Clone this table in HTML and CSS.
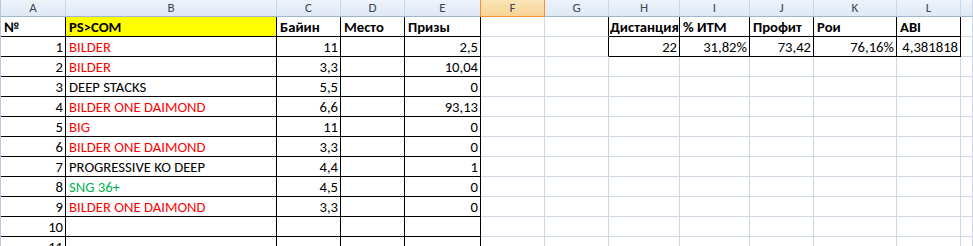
FILE: index.html
```html
<!DOCTYPE html>
<html>
<head>
<meta charset="utf-8">
<title>Турниры</title>
<link rel="stylesheet" href="styles.css">
</head>
<body>
<div class="sheet">
  <div class="row heads">
    <div class="ch">A</div><div class="ch">B</div><div class="ch">C</div><div class="ch">D</div>
    <div class="ch">E</div><div class="ch sel">F</div><div class="ch">G</div><div class="ch">H</div>
    <div class="ch">I</div><div class="ch">J</div><div class="ch">K</div><div class="ch">L</div><div class="ch"></div>
  </div>

  <div class="row">
    <div class="c b bold">№</div><div class="c b bold yellow">PS&gt;COM</div><div class="c b bold">Байин</div>
    <div class="c b bold">Место</div><div class="c b bold">Призы</div><div class="c"></div><div class="c edge"></div>
    <div class="c b bold tight">Дистанция</div><div class="c b bold">% ИТМ</div><div class="c b bold">Профит</div>
    <div class="c b bold">Рои</div><div class="c b bold">ABI</div><div class="c"></div>
  </div>
  <div class="row">
    <div class="c b n">1</div><div class="c b red">BILDER</div><div class="c b n">11</div>
    <div class="c b"></div><div class="c b n">2,5</div><div class="c"></div><div class="c edge"></div>
    <div class="c b n">22</div><div class="c b n">31,82%</div><div class="c b n">73,42</div>
    <div class="c b n">76,16%</div><div class="c b n">4,381818</div><div class="c"></div>
  </div>
  <div class="row">
    <div class="c b n">2</div><div class="c b red">BILDER</div><div class="c b n">3,3</div>
    <div class="c b"></div><div class="c b n">10,04</div><div class="c"></div><div class="c"></div>
    <div class="c"></div><div class="c"></div><div class="c"></div><div class="c"></div><div class="c"></div><div class="c"></div>
  </div>
  <div class="row">
    <div class="c b n">3</div><div class="c b">DEEP STACKS</div><div class="c b n">5,5</div>
    <div class="c b"></div><div class="c b n">0</div><div class="c"></div><div class="c"></div>
    <div class="c"></div><div class="c"></div><div class="c"></div><div class="c"></div><div class="c"></div><div class="c"></div>
  </div>
  <div class="row">
    <div class="c b n">4</div><div class="c b red">BILDER ONE DAIMOND</div><div class="c b n">6,6</div>
    <div class="c b"></div><div class="c b n">93,13</div><div class="c"></div><div class="c"></div>
    <div class="c"></div><div class="c"></div><div class="c"></div><div class="c"></div><div class="c"></div><div class="c"></div>
  </div>
  <div class="row">
    <div class="c b n">5</div><div class="c b red">BIG</div><div class="c b n">11</div>
    <div class="c b"></div><div class="c b n">0</div><div class="c"></div><div class="c"></div>
    <div class="c"></div><div class="c"></div><div class="c"></div><div class="c"></div><div class="c"></div><div class="c"></div>
  </div>
  <div class="row">
    <div class="c b n">6</div><div class="c b red">BILDER ONE DAIMOND</div><div class="c b n">3,3</div>
    <div class="c b"></div><div class="c b n">0</div><div class="c"></div><div class="c"></div>
    <div class="c"></div><div class="c"></div><div class="c"></div><div class="c"></div><div class="c"></div><div class="c"></div>
  </div>
  <div class="row">
    <div class="c b n">7</div><div class="c b">PROGRESSIVE KO DEEP</div><div class="c b n">4,4</div>
    <div class="c b"></div><div class="c b n">1</div><div class="c"></div><div class="c"></div>
    <div class="c"></div><div class="c"></div><div class="c"></div><div class="c"></div><div class="c"></div><div class="c"></div>
  </div>
  <div class="row">
    <div class="c b n">8</div><div class="c b green">SNG 36+</div><div class="c b n">4,5</div>
    <div class="c b"></div><div class="c b n">0</div><div class="c"></div><div class="c"></div>
    <div class="c"></div><div class="c"></div><div class="c"></div><div class="c"></div><div class="c"></div><div class="c"></div>
  </div>
  <div class="row">
    <div class="c b n">9</div><div class="c b red">BILDER ONE DAIMOND</div><div class="c b n">3,3</div>
    <div class="c b"></div><div class="c b n">0</div><div class="c"></div><div class="c"></div>
    <div class="c"></div><div class="c"></div><div class="c"></div><div class="c"></div><div class="c"></div><div class="c"></div>
  </div>
  <div class="row">
    <div class="c b n">10</div><div class="c b"></div><div class="c b"></div>
    <div class="c b"></div><div class="c b"></div><div class="c"></div><div class="c"></div>
    <div class="c"></div><div class="c"></div><div class="c"></div><div class="c"></div><div class="c"></div><div class="c"></div>
  </div>
  <div class="row">
    <div class="c b n">11</div><div class="c b"></div><div class="c b"></div>
    <div class="c b"></div><div class="c b"></div><div class="c"></div><div class="c"></div>
    <div class="c"></div><div class="c"></div><div class="c"></div><div class="c"></div><div class="c"></div><div class="c"></div>
  </div>
</div>
</body>
</html>
```

FILE: styles.css
```css
html, body { margin: 0; padding: 0; background: #fff; overflow: hidden; }
body {
font-family: Calibri, Carlito, Lato, "Noto Sans", sans-serif;
font-size: 11pt;
color: #000;
}

.sheet {
border-left: 1px solid #b8c8dc;
height: 246px;
overflow: hidden;
}

/* every row shares the same column widths (right border included) */
.row {
display: grid;
grid-template-columns: 65px 211px 64px 64px 76px 64px 64px 71px 70px 64px 83px 64px 1fr;
height: 20px;
}

.c {
box-sizing: border-box;
border-right: 1px solid #d0d7e5;
border-bottom: 1px solid #d0d7e5;
padding: 0 2px 0 3px;
display: flex;
align-items: flex-end;
line-height: 18px;
white-space: nowrap;
overflow: hidden;
}

/* thin black cell borders */
.c.b { border-right-color: #000; border-bottom-color: #000; }
.c.edge { border-right-color: #000; }

.c.n { justify-content: flex-end; }
.c.tight { padding-left: 1px; padding-right: 0; }
.bold { font-weight: bold; }
.yellow { background: #ffff00; }
.red { color: #ff0000; }
.green { color: #00b050; }

/* column letters */
.row.heads { height: 17px; }
.ch {
box-sizing: border-box;
background: linear-gradient(#eef3fa, #dfe8f4);
border-right: 1px solid #c9d6e6;
border-bottom: 1px solid #9eb6ce;
font-size: 13px;
color: #3c4652;
text-align: center;
line-height: 16px;
}
.ch.sel {
background: linear-gradient(#fbe5b8, #f8d495);
border-left: 1px solid #f29436;
border-right: 1px solid #f29436;
border-bottom: 1px solid #f29436;
margin-left: -1px;
}
```
